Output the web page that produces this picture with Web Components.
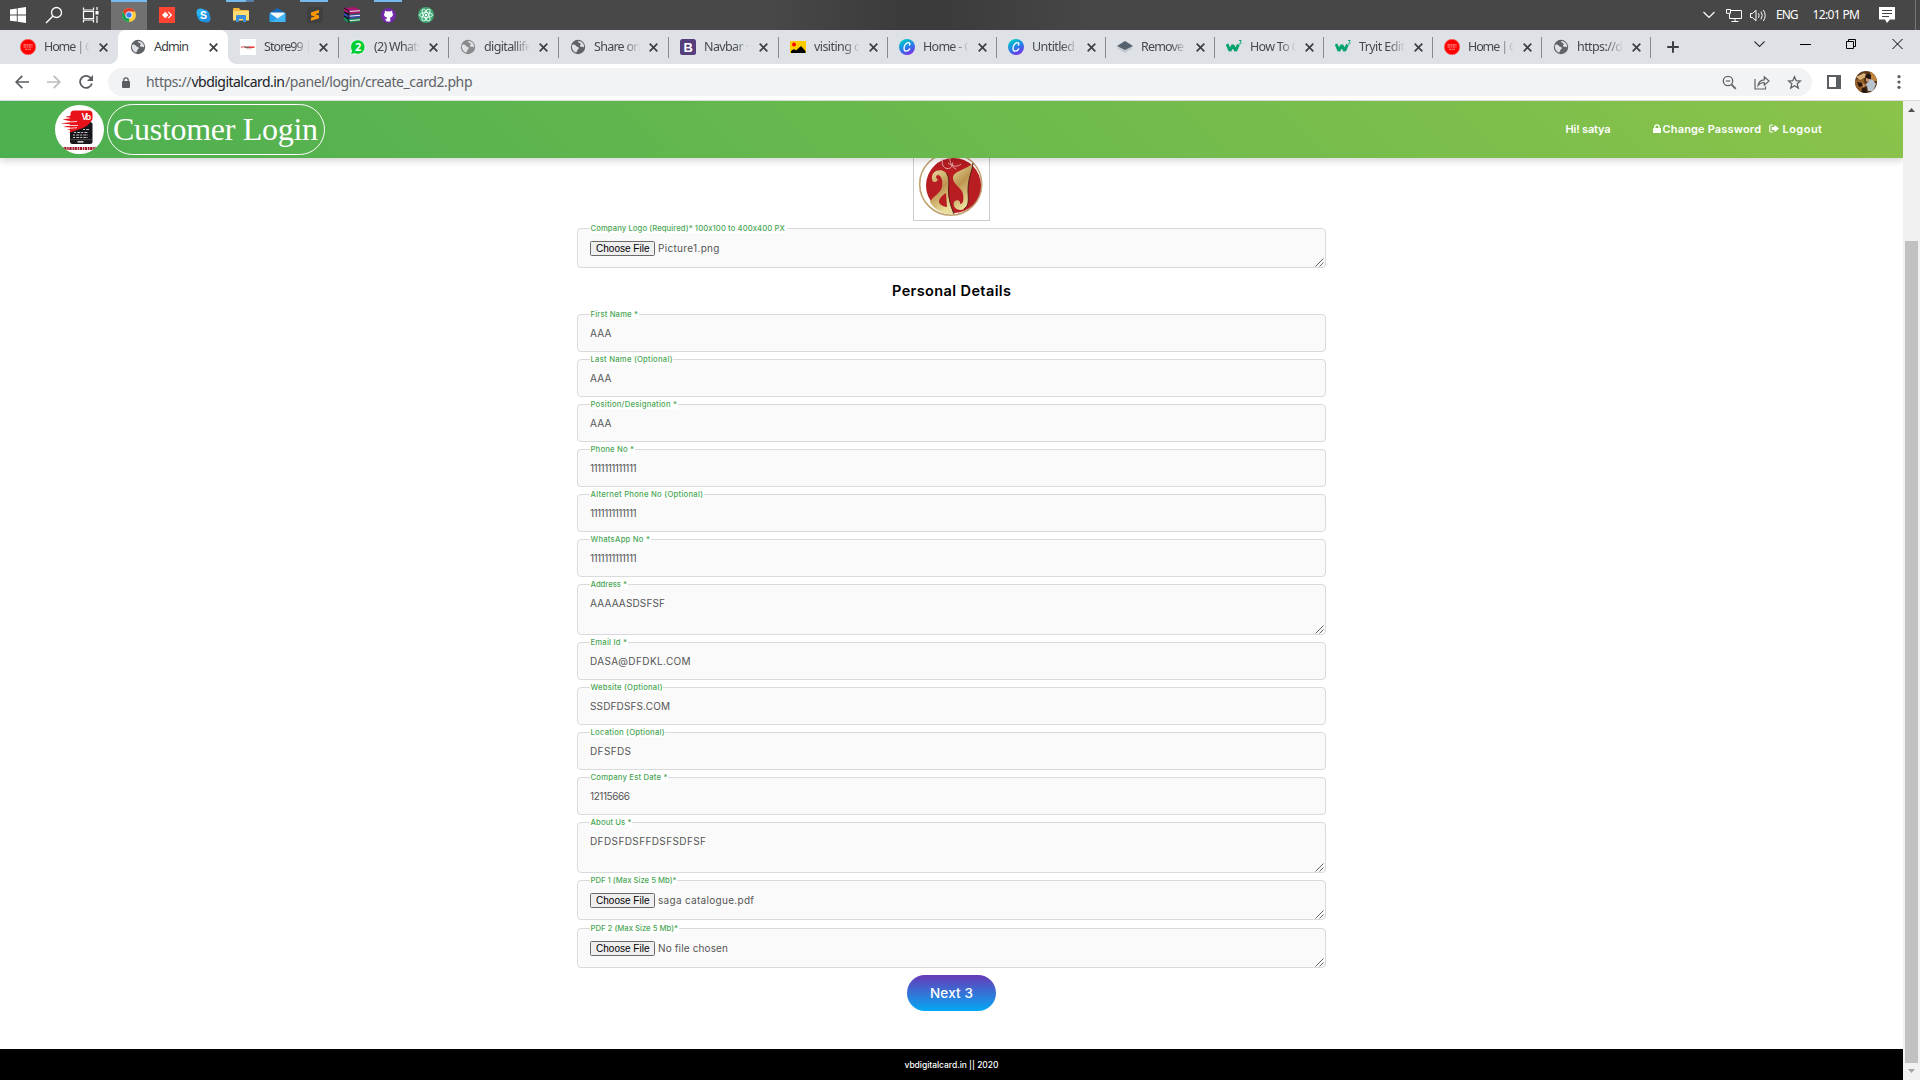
<!DOCTYPE html>
<html lang="en">
<head>
<meta charset="utf-8">
<title>Customer Login</title>
<style>
html,body{margin:0;width:1920px;height:1080px;overflow:hidden;background:#fff}
</style>
</head>
<body>
<desktop-screen></desktop-screen>
<script>
const define=(name,css,html,init)=>{
  customElements.define(name,class extends HTMLElement{
    connectedCallback(){
      if(this.shadowRoot)return;
      const r=this.attachShadow({mode:'open'});
      r.innerHTML=`<style>*{box-sizing:border-box}svg{display:block;flex:none}${css}</style>`+(typeof html==='function'?html(this):html);
      if(init)init(this,r);
    }
  });
};
const A=(e,n)=>e.getAttribute(n)||'';

/* Line of text whose tracking is adjusted to a given advance width */
class TextRun extends HTMLElement{
  connectedCallback(){
    if(this.shadowRoot)return;
    this.attachShadow({mode:'open'}).innerHTML='<style>:host{display:block;white-space:pre;flex:none}span{display:inline-block}</style><span><slot></slot></span>';
    TextRun.all.push(this);this.fit();
  }
  fit(){
    const w=+this.getAttribute('w');if(!w)return;
    const s=this.shadowRoot.querySelector('span');
    s.style.letterSpacing='0';
    const n=this.textContent.length,d=w-s.getBoundingClientRect().width;
    s.style.letterSpacing=(d/(n-1||1)).toFixed(3)+'px';
    this.style.width=w+'px';
  }
}
TextRun.all=[];
customElements.define('text-run',TextRun);

const globe=c=>`<svg width="16" height="16" viewBox="0 0 16 16"><circle cx="8" cy="8" r="7.2" fill="${c}"/><path d="M1.8 6.4C3 5 5.2 5.6 6 7c.6 1 2.6.6 2.8 2 .2 1.2-1.6 1.2-1.6 2.6 0 1-.6 1.8-1.4 2C3.4 12.600 1.6 9.600 1.800 6.400zM8.200 2c-.4 1.200.4 2 1.600 2 1 0 1.200 1.600.2 2.200-.4 1.200 1 1.800 2 1.600.8-.2 1.600.2 2 .8C14.600 5 12 2 8.200 2z" fill="#dee1e6"/></svg>`;
const red=`<svg width="16" height="16" viewBox="0 0 16 16"><circle cx="8" cy="8" r="7.700" fill="#f00" stroke="#f66" stroke-width=".6"/><path d="M3.500 5.900h9M3.500 8h9M5 10.200h6" stroke="#ff8f8f" stroke-width="1.100" stroke-dasharray="2.500 .5 1.500 .4"/></svg>`;
const canva=i=>`<svg width="16" height="16" viewBox="0 0 16 16"><defs><linearGradient id="g" x1=".2" y1="0" x2=".7" y2="1"><stop offset=".1" stop-color="#00c4cc"/><stop offset=".55" stop-color="#2b7be8"/><stop offset="1" stop-color="#7d2ae8"/></linearGradient></defs><circle cx="8" cy="8" r="8" fill="url(#g)"/><path d="M10.300 6.100c.9-.8.9-2.400-.8-2.400C6.800 3.700 5 6.700 5 9.200c0 2 1 3 2.300 3 1.500 0 2.700-1.100 3.400-2.300" fill="none" stroke="#fff" stroke-width="1.300" stroke-linecap="round"/></svg>`;
const w3=`<svg width="16" height="16" viewBox="0 0 16 16"><path d="M1 5l2.900 6.800L6.800 6.300l2.900 5.500L12.400 5.500" fill="none" stroke="#04a26c" stroke-width="2.900" stroke-linejoin="bevel"/><path d="M13 1.500h2.200L14.200 2.900c1.500 0 1.300 1.900-.1 1.900H13" fill="none" stroke="#04a26c" stroke-width=".9"/></svg>`;
const fav={
 red,globe:globe('#5f6368'),grey:globe('#8a8a8a'),canva:canva(),w3,
 store:`<svg width="16" height="16" viewBox="0 0 16 16"><rect width="16" height="16" fill="#fff"/><path d="M1 8.600q2-1.600 4-.4" stroke="#e88" stroke-width="1.500" fill="none"/><path d="M4.500 8.200h5" stroke="#755" stroke-width="1.500"/><path d="M9 8.200h5.500" stroke="#e33" stroke-width="1.500"/><path d="M6 9.700h6" stroke="#caa" stroke-width=".8"/></svg>`,
 wa:`<svg width="16" height="16" viewBox="0 0 16 16"><path d="M.4 15.600L1.700 11.900A7.200 7.200 0 1 1 4.800 14.600z" fill="#0c3" stroke="#fff" stroke-width=".8"/><text x="8.200" y="12" text-anchor="middle" font-family="Open Sans" font-weight="700" font-size="11" fill="#fff">2</text></svg>`,
 boot:`<svg width="16" height="16" viewBox="0 0 16 16"><rect width="16" height="16" rx="2.500" fill="#563d7c"/><text x="8.200" y="12.700" text-anchor="middle" font-family="Liberation Sans" font-weight="700" font-size="13" fill="#fff">B</text></svg>`,
 pic:`<svg width="16" height="16" viewBox="0 0 16 16"><rect y="2" width="16" height="12" fill="#fc0"/><circle cx="4" cy="5.500" r="2" fill="#f00"/><path d="M1 14v-2l3-2 2 1.500L11 7l4.500 5v2z" fill="#000"/></svg>`,
 layer:`<svg width="16" height="16" viewBox="0 0 16 16"><path d="M0 9l8-3 8 3-8 5z" fill="#c3c9cf"/><path d="M0 7l8-5 8 5-8 4z" fill="#54616e"/></svg>`
};

define('browser-tab',`
:host{display:flex;align-items:center;width:110px;height:34px;padding-left:12px;position:relative;font:12.500px "Noto Sans","Open Sans",sans-serif;color:#45494d}
:host([narrow]){width:109px}
:host([sep])::before{content:"";position:absolute;left:0;top:7px;width:1px;height:21px;background:#85888d}
:host([active]){background:#fff;border-radius:8px 8px 0 0;color:#3c4043}
:host([active])::before,:host([active])::after{content:"";position:absolute;bottom:0;width:8px;height:8px}
:host([active])::before{left:-8px;background:radial-gradient(circle at 0 0,transparent 7.500px,#fff 8px)}
:host([active])::after{right:-8px;background:radial-gradient(circle at 100% 0,transparent 7.500px,#fff 8px)}
.t{width:50px;margin:-1px 0 0 8px;overflow:hidden;-webkit-mask:linear-gradient(90deg,#000 60%,transparent 92%);mask:linear-gradient(90deg,#000 60%,transparent 92%)}
:host([active]) .t{-webkit-mask:none;mask:none}
.x{margin-left:4.500px}`,
e=>`${fav[A(e,'icon')]}<div class="t"><text-run w="${A(e,'w')}">${A(e,'label')}</text-run></div><svg class="x" width="9" height="9" viewBox="0 0 9 9"><path d="M.7.7l7.600 7.600M8.300.7L.7 8.300" stroke="#3c4043" stroke-width="1.700"/></svg>`);

const tabs=[['red','Home | C',49],['globe','Admin',35],['store','Store99 |',48],['wa','(2) Whats',49],['grey','digitallife',48],['globe','Share on',47],['boot','Navbar ·',45],['pic','visiting c',46],['canva','Home - C',49],['canva','Untitled',43],['layer','Remove',43],['w3','How To C',49.5],['w3','Tryit Edit',46],['red','Home | C',49],['globe','https://d',46]];
define('tab-strip',`
:host{display:flex;height:34px;background:#dee1e6;padding-left:8px;align-items:flex-start}
.end{border-left:1px solid #85888d;height:21px;margin-top:7px;padding:4px 0 0 16px}
.win{display:flex;margin-left:auto;gap:35px;padding:8px 17px 0 0}`,
()=>tabs.map(([i,l,w],n)=>`<browser-tab icon="${i}" label="${l}" w="${w}" ${n>6?'narrow':''} ${n==1?'active':''} ${n>2?'sep':''}></browser-tab>`).join('')+
`<div class="end"><svg width="12" height="12" viewBox="0 0 12 12"><path d="M6 .2v11.600M.2 6h11.600" stroke="#3c4043" stroke-width="2"/></svg></div>
<div class="win">
<svg width="11" height="12" viewBox="0 0 11 12"><path d="M.5 3.500l5 5 5-5" fill="none" stroke="#333" stroke-width="1.100"/></svg>
<svg width="11" height="12" viewBox="0 0 11 12"><path d="M0 6.500h11" stroke="#000"/></svg>
<svg width="11" height="12" viewBox="0 0 11 12"><path d="M.5 3.500h7v7h-7zM2.500 3.500v-2h7v7h-2" fill="none" stroke="#000"/></svg>
<svg width="11" height="12" viewBox="0 0 11 12"><path d="M.5 1l10 10M10.500 1l-10 10" stroke="#000"/></svg></div>`);

define('task-bar',`
:host{display:flex;height:30px;background:linear-gradient(90deg,#484848 0 40%,#3b3b3b 47%,#3b3b3b 49%,#474747 57%);align-items:stretch;color:#fff;font:12px "Noto Sans",sans-serif}
.sys{display:flex;width:111px}
.sys .i{width:36px}
.i{width:37px;display:flex;align-items:center;justify-content:center;position:relative}
.run::before{content:"";position:absolute;top:0;left:4px;width:28px;height:2px;background:#76b9ed}
.on{background:linear-gradient(90deg,#717171 36px,transparent 36px);padding-right:1px}.on::before{left:0;width:36px}
.two::after{content:"";position:absolute;top:0;left:24px;width:8px;height:2px;background:#5680a5}
.tray{margin-left:auto;display:flex;align-items:center}
.tray>*{margin-right:var(--m)}
.end{width:5px;height:30px;border-left:1px solid #777}`,
`<div class="sys"><div class="i"><svg width="16" height="16" viewBox="0 0 16 16"><path d="M0 2.400L6.800 1.400v6.100H0zM7.700 1.300L16 0v7.500H7.700zM0 8.400h6.800v6.200L0 13.700zM7.700 8.400H16V16l-8.300-1.200z" fill="#fff"/></svg></div>
<div class="i"><svg width="18" height="18" viewBox="0 0 18 18"><circle cx="11.500" cy="6.500" r="5" fill="none" stroke="#fff" stroke-width="1.300"/><path d="M8 10L1 17" stroke="#fff" stroke-width="1.400"/></svg></div>
<div class="i"><svg width="17" height="16" viewBox="0 0 17 16"><path d="M1.500.5v2.500h10V.5M1.500 15.500V13h10v2.500M1.500 4.500h10v7h-10zM15 0v3M15 9v7" fill="none" stroke="#fff" stroke-width="1.200"/><rect x="13.500" y="4" width="3" height="3.500" fill="#fff"/></svg></div></div>
<div class="i run on"><svg width="14" height="14" viewBox="0 0 14 14"><circle cx="7" cy="7" r="7" fill="#ffcd3c"/><path d="M.94 3.500A7 7 0 0 1 13.060 3.500H7L4 8.800z" fill="#e33b2e"/><path d="M.94 3.500L4 8.800 7.500 10.500 6.800 14A7 7 0 0 1 .94 3.500z" fill="#15a05a"/><circle cx="7" cy="7" r="3.500" fill="#fff"/><circle cx="7" cy="7" r="2.700" fill="#3d7ff0"/></svg></div>
<div class="i"><svg width="16" height="16" viewBox="0 0 16 16"><rect width="16" height="16" fill="#ff4434"/><path d="M3 8l3.300-3.300L9.600 8l-3.300 3.300z" fill="#fff"/><path d="M8.600 4.700h1.300L13.200 8l-3.300 3.300H8.600L11.200 8z" fill="#fff"/><path d="M8 5.200L10.800 8 8 10.800" stroke="#ff4434" stroke-width=".8" fill="none"/></svg></div>
<div class="i"><svg width="15" height="15" viewBox="0 0 15 15"><circle cx="7.500" cy="7.500" r="6.300" fill="#1b9de8"/><circle cx="4.500" cy="4.500" r="4" fill="#29b3f2"/><circle cx="10.500" cy="10.500" r="4" fill="#2190df"/><text x="7.500" y="11.300" text-anchor="middle" font-family="Liberation Sans" font-weight="700" font-size="10.500" fill="#fff">S</text></svg></div>
<div class="i run two"><svg width="16" height="14" viewBox="0 0 16 14"><path d="M0 1q0-1 1-1h5l1.500 2H15q1 0 1 1v9H0z" fill="#f6b73c"/><path d="M0 3h16v9.500H0z" fill="#ffdc73"/><path d="M3 14V8q0-1 1-1h8q1 0 1 1v6h-3v-3H6v3z" fill="#3a8edb"/></svg></div>
<div class="i"><svg width="17" height="14" viewBox="0 0 17 14"><path d="M.5 5l8-5 8 5v8.500H.5z" fill="#1369b8"/><path d="M1.500 4.500h14V9L8.500 11l-7-2z" fill="#f4f8fb"/><path d="M.5 5l8 5.500L.5 14z" fill="#2a9de8"/><path d="M16.500 5l-8 5.500L.5 14h16z" fill="#42b5f5"/></svg></div>
<div class="i run"><svg width="16" height="16" viewBox="0 0 16 16"><rect width="16" height="16" rx="1" fill="#404040"/><path d="M4 5.400l8-2.600v3L8 7.200l4 1.300v2.700l-8 2.600v-3l4-1.300L4 8.200z" fill="#ff9800"/></svg></div>
<div class="i"><svg width="16" height="16" viewBox="0 0 16 16"><path d="M0 1l11-1 5 3v3L5 7 0 4z" fill="#a8186e"/><path d="M0 6l5 2 11-1v3L5 12 0 9z" fill="#3648b0"/><path d="M0 10l5 2 11-1v3L5 16l-5-3z" fill="#158a57"/><path d="M5 4.500l11-.8M5 9.200l11-.9M5 13.700l11-.9" stroke="#eee"/><path d="M0 1l5 3v3L0 5l5 3v3.500L0 9l5 4v3" fill="none" stroke="#111"/></svg></div>
<div class="i run"><svg width="15" height="15" viewBox="0 0 15 15"><circle cx="7.500" cy="7.500" r="7.500" fill="#7129a8"/><path d="M5.700 13.500v-2.200c-1.500.3-2-.7-2.600-1.300M9.300 13.500v-3c0-.5-.2-.8-.4-1 2-.2 3-1.200 3-3 0-.8-.3-1.500-.7-2 .1-.5.100-1.200-.1-1.700 0 0-.8 0-1.700.7a6.500 6.500 0 0 0-3.700 0C4.800 2.800 4 2.800 4 2.800c-.3.600-.3 1.200-.1 1.700-.5.500-.8 1.200-.8 2 0 1.800 1.100 2.800 3 3-.3.300-.4.600-.4 1v3z" fill="#fff"/></svg></div>
<div class="i"><svg width="16" height="16" viewBox="0 0 16 16"><circle cx="8" cy="8" r="8" fill="#41a873"/><g fill="none" stroke="#e8fff4" stroke-width=".9"><ellipse cx="8" cy="8" rx="6.500" ry="2.500"/><ellipse cx="8" cy="8" rx="6.500" ry="2.500" transform="rotate(60 8 8)"/><ellipse cx="8" cy="8" rx="6.500" ry="2.500" transform="rotate(120 8 8)"/></g><circle cx="8" cy="8" r="1.200" fill="#fff"/></svg></div>
<div class="tray">
<svg style="--m:11px" width="12" height="8" viewBox="0 0 12 8"><path d="M.5 1l5.500 5.500L11.500 1" fill="none" stroke="#fff" stroke-width="1.200"/></svg>
<svg style="--m:8px" width="16" height="13" viewBox="0 0 16 13"><path d="M5 1.500h10.500v8H3.500V5M.5.500h4v3.800h-4zM9 9.500V12M5.500 12.500h7" fill="none" stroke="#fff"/></svg>
<svg style="--m:10px" width="16" height="13" viewBox="0 0 16 13"><path d="M.5 4.500h2L6 1.200v10.600L2.500 8.500h-2z" fill="none" stroke="#fff"/><path d="M8.500 4.300q1.300 2.200 0 4.400M11 2.700q2.500 3.800 0 7.600M13.300 1q3.800 5.500 0 11" fill="none" stroke="#fff"/></svg>
<text-run style="--m:14px;margin-top:-1px" w="22.500">ENG</text-run>
<text-run style="--m:19px;margin-top:-1px" w="47.500">12:01 PM</text-run>
<svg style="--m:20px" width="16" height="16" viewBox="0 0 16 16"><path d="M0 0h16v12.500h-5L8 16l-2-3.500H0z" fill="#fff"/><path d="M3 3.500h10M3 6.500h10M3 9.500h7" stroke="#444"/></svg>
<div class="end" style="--m:0"></div></div>`);

define('address-bar',`
:host{display:flex;height:37px;background:#fff;border-bottom:1px solid #d9dbdf;align-items:center;padding:0 19px 0 15px}
.nav{display:flex;gap:18px;width:93px;align-items:center}
.omni{display:flex;align-items:center;width:1704px;height:28px;border-radius:14px;background:#f1f3f4;padding:0 10px 0 14px;font:14px "Noto Sans","Open Sans",sans-serif;color:#5f6368}
.lock{margin-right:16px}.omni b{font-weight:400;color:#202124}
.url{display:flex;margin-top:-2px}
.acts{display:flex;gap:17px;margin-left:auto;align-items:center}
.right{display:flex;align-items:center;margin-left:15px}
`,`<div class="nav">
<svg width="14" height="14" viewBox="0 0 14 14"><path d="M14 7H1.300M7.300.8L1.100 7l6.200 6.200" fill="none" stroke="#5a5d61" stroke-width="1.700"/></svg>
<svg width="14" height="14" viewBox="0 0 14 14"><path d="M0 7h12.700M6.700.8L12.900 7l-6.200 6.200" fill="none" stroke="#babcbe" stroke-width="1.700"/></svg>
<svg width="14" height="14" viewBox="0 0 14 14"><path d="M11.700 3A6 6 0 1 0 12.900 8.500" fill="none" stroke="#5a5d61" stroke-width="1.800"/><path d="M14 0v6H8z" fill="#5a5d61"/></svg></div>
<div class="omni"><svg class="lock" width="8" height="11" viewBox="0 0 8 11"><rect y="4" width="8" height="7" rx="1" fill="#5a5d61"/><path d="M1.800 4.500V3a2.200 2.200 0 0 1 4.400 0v1.500" fill="none" stroke="#5a5d61" stroke-width="1.200"/></svg>
<div class="url"><text-run w="45.500">https://</text-run><b><text-run w="93.500">vbdigitalcard.in</text-run></b><text-run w="187.500">/panel/login/create_card2.php</text-run></div>
<div class="acts">
<svg width="15" height="15" viewBox="0 0 15 15"><circle cx="6" cy="6" r="4.700" fill="none" stroke="#5f6368" stroke-width="1.300"/><path d="M9.300 9.300l4.500 4.500" stroke="#5f6368" stroke-width="1.800"/><path d="M3.800 6h4.400" stroke="#5f6368" stroke-width="1.200"/></svg>
<svg width="16" height="15" viewBox="0 0 16 15"><path d="M1 4v10h10.500v-2.500M4 10.500C4.500 6.800 7 5 10.300 4.800V1.800L15 6l-4.700 4.200V7.500C7.500 7.500 5.500 8.500 4 10.500z" fill="none" stroke="#5f6368" stroke-width="1.200"/></svg>
<svg width="15" height="15" viewBox="0 0 15 15"><path d="M7.500 1.700l1.700 4 4.300.3-3.300 2.800 1.100 4.300-3.800-2.300-3.800 2.300 1.100-4.300L1.500 6l4.300-.3z" fill="none" stroke="#5f6368" stroke-width="1.300"/></svg></div></div>
<div class="right">
<svg width="14" height="14" viewBox="0 0 14 14"><rect x="1" y="1" width="12" height="12" fill="#fff" stroke="#5a5d61" stroke-width="2"/><path d="M9 0h5v14H9z" fill="#5a5d61"/></svg>
<svg style="margin:0 20px 0 14px" width="22" height="22" viewBox="0 0 22 22"><defs><clipPath id="c"><circle cx="11" cy="11" r="11"/></clipPath></defs><g clip-path="url(#c)"><rect width="22" height="22" fill="#5a3518"/><path d="M0 9l8-2 3 9-6 6H0z" fill="#94602a"/><path d="M1 6l8-4 4 3-8 4z" fill="#d9b078"/><path d="M15 0h7v10h-6z" fill="#bf8440"/><path d="M10 5q3-4 6-1v4l-4 2z" fill="#231710"/><path d="M14 8l4 1 3 4-3 7h-5l-1-5-2-1 3-3z" fill="#b9c2cf"/><path d="M11 7l3 1-1 3-2-1zM7 12l3 2-1 2-3-1z" fill="#d79a6c"/><path d="M2 11l5 1 1 3-4 1zM7 17l4-1 1 6H6z" fill="#29170d"/></g></svg>
<svg width="4" height="14" viewBox="0 0 4 14"><g fill="#5a5d61"><circle cx="2" cy="1.700" r="1.600"/><circle cx="2" cy="7" r="1.600"/><circle cx="2" cy="12.300" r="1.600"/></g></svg></div>`);

define('site-header',`
:host{display:flex;position:relative;z-index:2;height:57px;flex:none;padding-left:55px;align-items:center;background:linear-gradient(45deg,#4caf50,#8bc34a);box-shadow:0 2px 8px rgba(0,0,0,.2);color:#fff;font:600 11px/14px Inter,sans-serif}
.pill{margin-left:3px;width:218px;height:51px;border:1px solid #fff;border-radius:26px;display:flex;align-items:center;padding:0 0 2px 5px;font:32px/34px "Liberation Serif",serif}
.nav{display:flex;align-items:center;margin-left:auto;padding:0 81px 2px 0}`,
`<svg width="49" height="49" viewBox="0 0 49 49"><defs><clipPath id="k"><circle cx="24.500" cy="24.500" r="24.500"/></clipPath></defs><circle cx="24.500" cy="24.500" r="24.500" fill="#fff"/><g clip-path="url(#k)"><rect x="15" y="17" width="22.500" height="22" rx="2.500" fill="#17171b"/><path d="M15.500 9q0-3.500 3.500-3.500h15q3.500 0 3.500 3.500v5q-3 6.500-11 9.500L15 27.500z" fill="#e8131a"/><path d="M16 10.500l-6 1.500 7 1-9.500 1.500L17 16.500 6 18.500l12 1L8 22l10 .5-6 2.500 7-.5-6 3.500 12-5V11z" fill="#e8131a"/><path d="M8 17.300l14-.8M10 20.500h13M12 23.500l10-.8" stroke="#fff" stroke-width=".8"/><g stroke="#c4c4c4" stroke-width="1.200" stroke-dasharray="2 1.200 3 1"><path d="M19 27.500h14M18 30h15M18 32.500h15M28 24.500h6"/></g><path d="M15 34.700h22" stroke="#555" stroke-width=".8"/><path d="M22.500 36.800h6" stroke="#fff" stroke-width="1.200"/><text x="26.500" y="15" font-family="Inter" font-size="8.500" font-weight="600" fill="#fff" textLength="9.500">Vb</text><path d="M7 43.500h35" stroke="#a01828" stroke-width="2.800" stroke-dasharray="1.500 .6 2.400 .7"/></g></svg>
<div class="pill"><text-run w="205">Customer Login</text-run></div>
<div class="nav"><text-run w="45">Hi! satya</text-run>
<svg style="margin:0 2px 0 42px" width="8" height="9" viewBox="0 0 8 9"><rect y="4" width="8" height="5" rx=".7" fill="#fff"/><path d="M1.800 4.500V3a2.200 2.200 0 0 1 4.400 0v1.500" fill="none" stroke="#fff" stroke-width="1.300"/></svg>
<text-run w="98.500">Change Password</text-run>
<svg style="margin:0 4px 0 7.500px" width="10" height="9" viewBox="0 0 10 9"><path d="M4 1H2Q.8 1 .8 2v5Q.8 8 2 8h2" fill="none" stroke="#fff" stroke-width="1.200"/><path d="M2.700 3h2.800V.8L10 4.500 5.500 8.200V6H2.700z" fill="#fff"/></svg>
<text-run w="39.500">Logout</text-run></div>`);

define('form-field',`
:host{display:block;position:relative;width:749px;height:38px;margin-bottom:7px;border:1px solid #d9dadb;border-radius:4px;background:#fafafa;font:10px/13px Inter,"Noto Sans",sans-serif;color:#555}
:host([kind=area]){height:51px}:host([kind=file]){height:40px}
.lab{position:absolute;left:12px;top:-5px;padding:0 .5px;background:#fff;color:#4ba655;font:500 7.700px/9px Inter,sans-serif}
.val{display:flex;align-items:center;padding:12px 0 0 12px}
.btn{width:65px;height:15px;border:1px solid #6b6b6b;border-radius:1.500px;background:#efefef;color:#000;font:10px/13px "Liberation Sans",sans-serif;padding-left:5px;margin-right:3px}
.grip{position:absolute;right:1px;bottom:0}`,
e=>`<div class="lab"><text-run w="${A(e,'lw')}">${A(e,'label')}</text-run></div><div class="val">${A(e,'kind')=='file'?'<div class="btn"><text-run w="53.500">Choose File</text-run></div>':''}<text-run w="${A(e,'vw')}">${A(e,'value')}</text-run></div>${A(e,'kind')?'<svg class="grip" width="9" height="9" viewBox="0 0 9 9"><path d="M.5 8.500l8-8M4.500 8.500l4-4" stroke="#555" stroke-width=".9"/></svg>':''}`);

define('company-logo',`:host{display:block;width:77px;height:77px;border:1px solid #ccc;background:#fff;flex:none}`,
`<svg width="75" height="75" viewBox="0 0 75 75"><defs><linearGradient id="a" x1="0" y1="0" x2=".4" y2="1"><stop offset="0" stop-color="#e9dfa0"/><stop offset=".5" stop-color="#bd9550"/><stop offset="1" stop-color="#e8dd98"/></linearGradient></defs>
<circle cx="36.700" cy="39.200" r="31" fill="#fff" stroke="#c1a272" stroke-width="1.600"/><circle cx="39.500" cy="40.500" r="27.500" fill="#b81d22"/>
<path d="M18 34C17 26 26 23 31 27C36 31 35 38 34 44C34 54 37 62 40 69C30 70 20 65 16 57C17 53 27 48 28 42C29 36 28 31 24 30C21 30 22 34 24 34.500C22.500 38 18 38 18 34z" fill="url(#a)"/><path d="M32 48C27 51 23 56 26 59C28 61 31 62 33 62z" fill="#b81d22"/><path d="M32.500 28c3 5 2.500 10 2 16 0 10 2.500 18 5.500 25" fill="none" stroke="#54201c" stroke-width="1"/>
<path d="M39 32C40 26 50 26 59 18C58 27 54 34 54 45C54 53 56 60 50 64C44 67 38 62 40 57C42 54 47 55 46 59C49 59 50 55 49 49C48 43 38 39 39 32z" fill="url(#a)"/><path d="M59 18C58 27 54 34 54 45C54 53 56 60 50 64" fill="none" stroke="#562018" stroke-width="1"/>
<path d="M29 14c-2 4 0 9 4 9.500 4 .4 6-2.500 5.500-6M37 9c-3 5 0 13 5 15M34 18c5 4 10 4 13 1" fill="none" stroke="#e3a9a9" stroke-width="1"/></svg>`);

const fields=[
['First Name *',47.5,'AAA',21.5],['Last Name (Optional)',82,'AAA',21.5],['Position/Designation *',86.5,'AAA',21.5],['Phone No *',43.5,'1111111111111',46.5],['Alternet Phone No (Optional)',112.5,'1111111111111',46.5],['WhatsApp No *',59.5,'1111111111111',46.5],['Address *',36.5,'AAAAASDSFSF',75,'area'],['Email Id *',36.5,'DASA@DFDKL.COM',101],['Website (Optional)',72,'SSDFDSFS.COM',80],['Location (Optional)',74,'DFSFDS',41],['Company Est Date *',77,'12115666',40],['About Us *',41,'DFDSFDSFFDSFSDFSF',116,'area'],['PDF 1 (Max Size 5 Mb)*',86,'saga catalogue.pdf',96,'file'],['PDF 2 (Max Size 5 Mb)*',87.5,'No file chosen',70,'file']];
const field=f=>`<form-field label="${f[0]}" lw="${f[1]}" value="${f[2]}" vw="${f[3]}" ${f[4]?`kind="${f[4]}"`:''}></form-field>`;
define('card-form',`
:host{display:flex;flex-direction:column;align-items:center;flex:1;min-height:0}
company-logo{margin:-14px 0 7px}
h3{margin:6px 0 14px;height:19px;font:600 14.500px/19px Inter,sans-serif;color:#000}
form-field:last-of-type{margin-top:1px}
.next{width:89px;height:36px;border-radius:18px;background:linear-gradient(#673ab7,#03a9f4);color:#fff;font:500 13.500px/36px Inter,sans-serif;display:flex;justify-content:center}`,
()=>`<company-logo></company-logo>${field(['Company Logo (Required)* 100x100 to 400x400 PX',196,'Picture1.png',61.5,'file'])}<h3><text-run w="119">Personal Details</text-run></h3>${fields.map(field).join('')}<div class="next"><text-run w="43">Next 3</text-run></div>`);

define('site-footer',`:host{display:flex;height:31px;background:#000;color:#fff;justify-content:center;align-items:center;font:500 8.500px/12px Inter,sans-serif;flex:none;padding-top:1px}`,`<text-run w="94">vbdigitalcard.in || 2020</text-run>`);

define('scroll-bar',`:host{display:flex;flex-direction:column;width:17px;background:#f1f1f1;align-items:center}
i{width:13px;height:822px;background:#c1c1c1;margin-top:129px}svg{margin-top:7px}.d{margin:auto 0 7px}`,
`<svg width="7" height="4" viewBox="0 0 7 4"><path d="M0 4L3.500 0 7 4z" fill="#505050"/></svg><i></i><svg class="d" width="7" height="4" viewBox="0 0 7 4"><path d="M0 0l3.500 4L7 0z" fill="#a3a3a3"/></svg>`);

define('desktop-screen',`
:host{display:flex;flex-direction:column;width:1920px;height:1080px;overflow:hidden;background:#fff}
.view{display:flex;height:979px}.page{display:flex;flex-direction:column;width:1903px;overflow:hidden}`,
`<task-bar></task-bar><tab-strip></tab-strip><address-bar></address-bar><div class="view"><div class="page"><site-header></site-header><card-form></card-form><site-footer></site-footer></div><scroll-bar></scroll-bar></div>`);
TextRun.all.forEach(t=>t.fit());
</script>
</body>
</html>
